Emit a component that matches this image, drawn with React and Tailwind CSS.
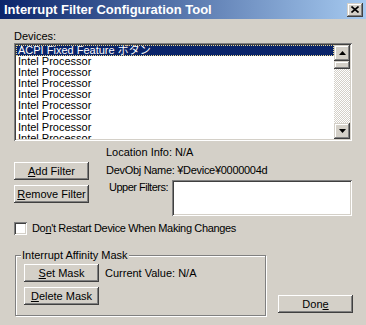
import React from "react";

const raised =
  "bg-[#d4d0c8] shadow-[inset_-1px_-1px_#404040,inset_1px_1px_#fff,inset_-2px_-2px_#808080,inset_2px_2px_#d4d0c8]";
const sbRaised =
  "bg-[#d4d0c8] shadow-[inset_-1px_-1px_#404040,inset_1px_1px_#d4d0c8,inset_-2px_-2px_#808080,inset_2px_2px_#fff]";
const sunken =
  "bg-white shadow-[inset_1px_1px_#808080,inset_-1px_-1px_#fff,inset_2px_2px_#404040,inset_-2px_-2px_#d4d0c8]";

const Button = ({ children, className = "" }) => (
  <div
    className={`${raised} w-[75px] h-[18px] flex items-center justify-center text-[11px] leading-none ${className}`}
  >
    {children}
  </div>
);

const Arrow = ({ down }) => (
  <svg width="7" height="4" viewBox="0 0 7 4">
    {down ? <path d="M0 0h7L3.5 4z" fill="#000" /> : <path d="M0 4h7L3.5 0z" fill="#000" />}
  </svg>
);

const devices = [
  "ACPI Fixed Feature ボタン",
  "Intel Processor",
  "Intel Processor",
  "Intel Processor",
  "Intel Processor",
  "Intel Processor",
  "Intel Processor",
  "Intel Processor",
  "Intel Processor",
];

export default function App() {
  return (
    <div className="w-[366px] h-[325px] overflow-hidden bg-[#d4d0c8] text-black font-['Liberation_Sans','Noto_Sans_CJK_JP',sans-serif] text-[11px]">
      {/* Title bar */}
      <div className="h-[19px] flex items-center justify-between pl-[4px] pr-[3px] bg-[linear-gradient(to_right,#0a246a,#a6caf0)]">
        <span className="text-white font-bold text-[13px] leading-none">
          Interrupt Filter Configuration Tool
        </span>
        <div className={`${sbRaised} w-[16px] h-[14px] flex items-center justify-center`}>
          <svg width="8" height="7" viewBox="0 0 8 7">
            <path d="M0.5 0.5L7.5 6.5M7.5 0.5L0.5 6.5" stroke="#000" strokeWidth="1.6" />
          </svg>
        </div>
      </div>

      <div className="pl-[14px] pr-[14px]">
        <div className="mt-[11px] h-[13px] leading-[13px]">Devices:</div>

        {/* Device list */}
        <div className={`${sunken} w-[338px] h-[98px] p-[2px] flex`}>
          <div className="flex-1 overflow-hidden">
            {devices.map((d, i) => (
              <div
                key={i}
                className={`h-[11px] leading-[11px] pl-[2px] whitespace-nowrap ${
                  i === 0
                    ? "bg-[#0a246a] text-white outline outline-1 outline-dotted outline-offset-[-1px] outline-[#e8d890]"
                    : ""
                }`}
              >
                {d}
              </div>
            ))}
          </div>
          <div className="w-[16px] flex flex-col">
            <div className={`${sbRaised} h-[16px] flex items-center justify-center`}>
              <Arrow />
            </div>
            <div className={`${sbRaised} h-[8px]`} />
            <div className="flex-1 bg-[repeating-conic-gradient(#fff_0_25%,#d4d0c8_0_50%)] bg-[length:2px_2px]" />
            <div className={`${sbRaised} h-[16px] flex items-center justify-center`}>
              <Arrow down />
            </div>
          </div>
        </div>

        {/* Filter area */}
        <div className="flex">
          <div className="flex flex-col gap-[5px] mt-[21px] shrink-0">
            <Button>
              <span><u>A</u>dd Filter</span>
            </Button>
            <Button>
              <span><u>R</u>emove Filter</span>
            </Button>
          </div>
          <div className="ml-[17px] flex flex-col">
            <div className="mt-[5px] h-[13px] leading-[13px]">Location Info: N/A</div>
            <div className="mt-[5px] h-[13px] leading-[13px] tracking-[-0.3px]">
              DevObj Name: ¥Device¥0000004d
            </div>
            <div className="flex mt-[3px]">
              <div className="ml-[3px] w-[63px] shrink-0 mt-[1px] leading-[13px] whitespace-nowrap tracking-[-0.5px]">
                Upper Filters:
              </div>
              <div className={`${sunken} w-[180px] h-[36px] shrink-0`} />
            </div>
          </div>
        </div>

        {/* Checkbox */}
        <div className="flex items-center mt-[6px] h-[13px]">
          <div className={`${sunken} w-[13px] h-[13px]`} />
          <span className="ml-[5px] leading-[13px] tracking-[-0.35px]">
            Do<u>n</u>'t Restart Device When Making Changes
          </span>
        </div>

        {/* Affinity group + Done */}
        <div className="flex mt-[20px]">
          <div className="relative ml-[1px] w-[251px] h-[61px] border border-[#808080] shadow-[1px_1px_0_#fff,inset_1px_1px_0_#fff] pl-[8px] pt-[8px]">
            <span className="absolute left-[5px] top-[-7px] px-[1px] bg-[#d4d0c8] leading-[13px]">
              Interrupt Affinity Mask
            </span>
            <div className="flex items-center">
              <Button>
                <span><u>S</u>et Mask</span>
              </Button>
              <span className="ml-[6px]">Current Value: N/A</span>
            </div>
            <Button className="mt-[5px]">
              <span><u>D</u>elete Mask</span>
            </Button>
          </div>
          <Button className="ml-auto mr-[-1px] mt-[40px]">
            <span>Don<u>e</u></span>
          </Button>
        </div>
      </div>
    </div>
  );
}
